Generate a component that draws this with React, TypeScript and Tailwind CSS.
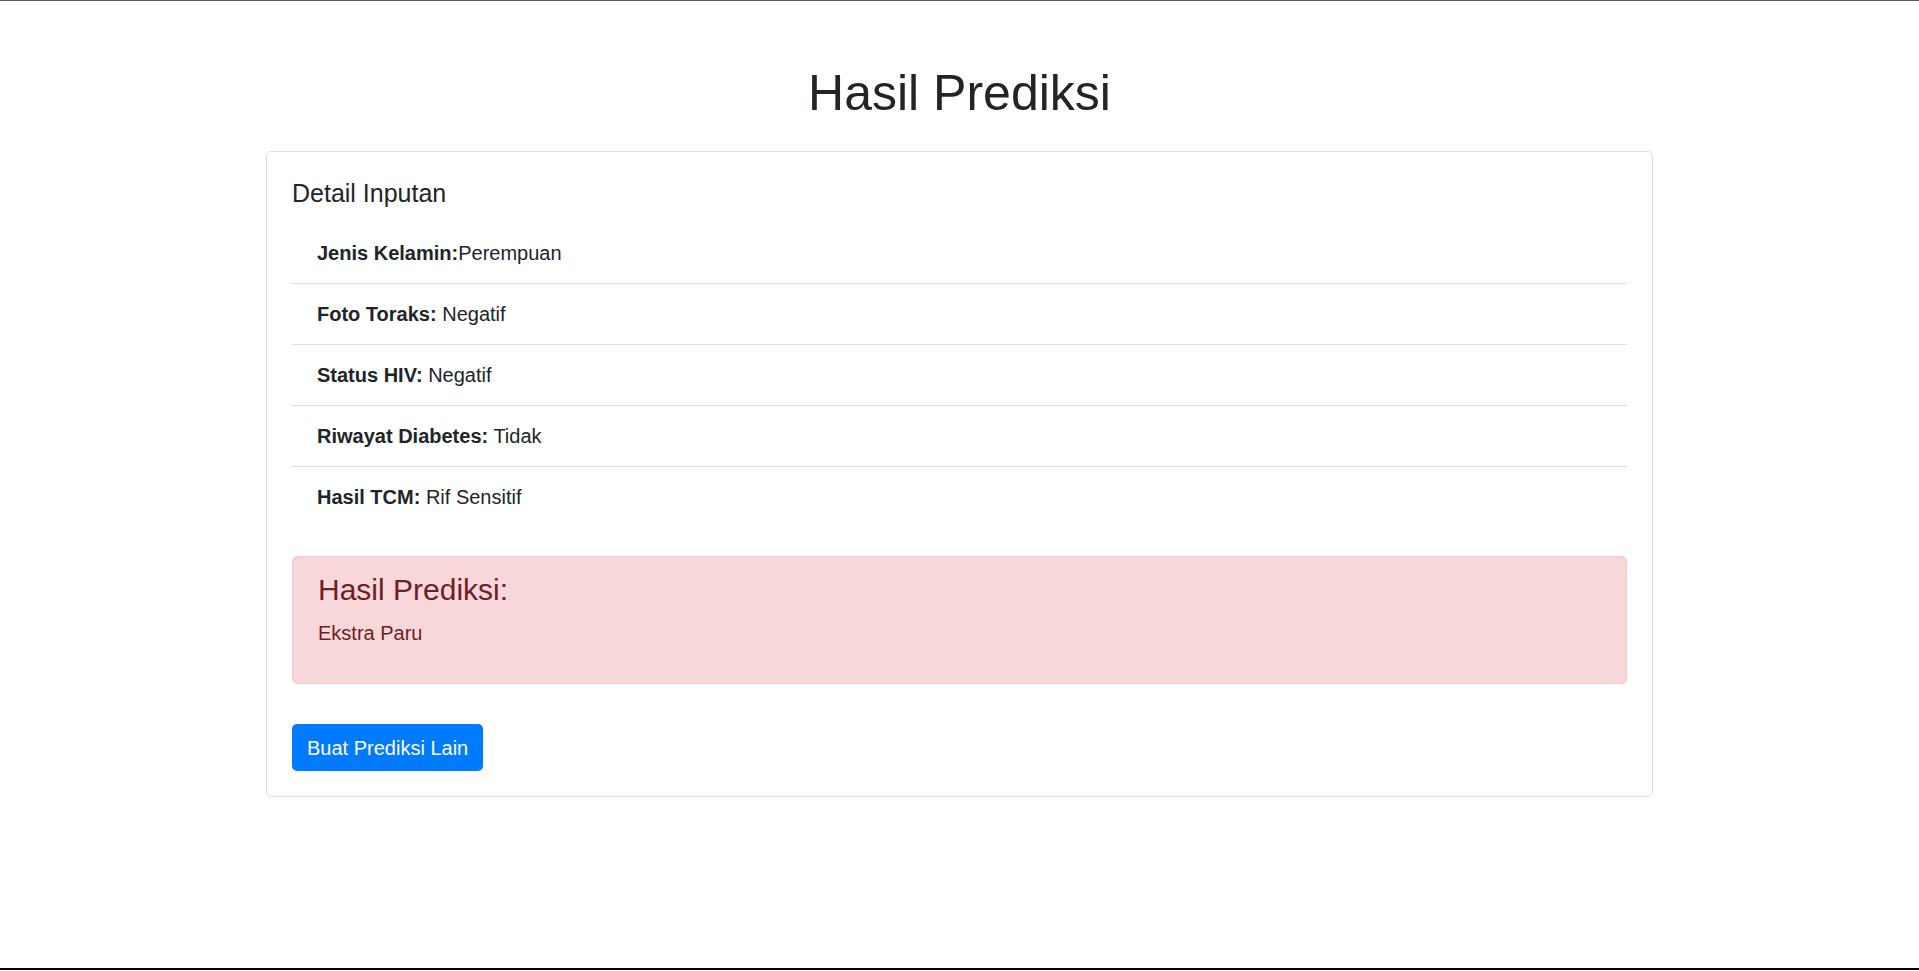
const rows = [
  { label: "Jenis Kelamin:", value: "Perempuan", gap: false },
  { label: "Foto Toraks:", value: "Negatif", gap: true },
  { label: "Status HIV:", value: "Negatif", gap: true },
  { label: "Riwayat Diabetes:", value: "Tidak", gap: true },
  { label: "Hasil TCM:", value: "Rif Sensitif", gap: true },
]

export default function App() {
  return (
    <div
      className="flex h-[971px] w-full flex-col bg-white text-[#212529]"
      style={{ fontFamily: '"Liberation Sans", Arial, sans-serif' }}
    >
      {/* screen edge */}
      <div className="h-px w-full bg-[#5a5a5a]" />

      <main className="flex-1 pt-[62px]">
        <h1 className="mb-[28px] text-center text-[50px] font-normal leading-[60px]">Hasil Prediksi</h1>

        {/* Card */}
        <div className="mx-auto w-[1387px] rounded-[5px] border border-[#dfdfdf] bg-white p-[25px] pt-[26px]">
          <h5 className="mb-[15px] text-[25px] leading-[30px]">Detail Inputan</h5>

          <ul>
            {rows.map((r, i) => (
              <li
                key={r.label}
                className={
                  "px-[25px] py-[15px] text-[20px] leading-[30px] " +
                  (i < rows.length - 1 ? "border-b border-[#dfdfdf]" : "")
                }
              >
                <strong className="font-bold">{r.label}</strong>
                {r.gap ? " " : ""}
                {r.value}
              </li>
            ))}
          </ul>

          {/* Result alert */}
          <div className="mt-[29px] rounded-[5px] border border-[#f5c6cb] bg-[#f8d7da] px-[25px] py-[15px] text-[#721c24]">
            <h4 className="mb-[10px] text-[30px] leading-[36px]">Hasil Prediksi:</h4>
            <p className="mb-[20px] text-[20px] leading-[30px]">Ekstra Paru</p>
          </div>

          <button className="mt-[40px] h-[47px] rounded-[5px] bg-[#007bff] px-[15px] text-[20px] leading-[30px] text-white">
            Buat Prediksi Lain
          </button>
        </div>
      </main>

      <div className="h-[2px] w-full bg-black" />
      <div className="h-px w-full bg-white" />
    </div>
  )
}
